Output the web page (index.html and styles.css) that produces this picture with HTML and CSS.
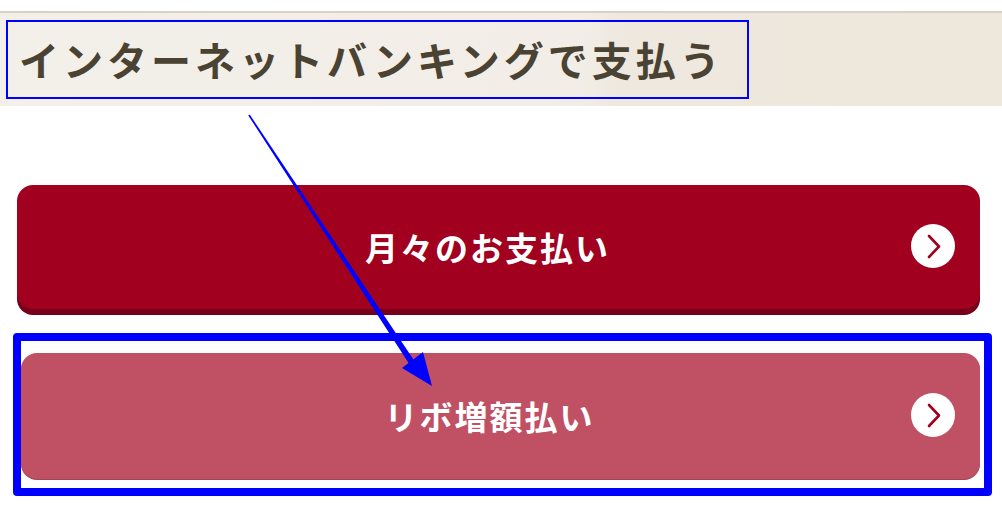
FILE: index.html
```html
<!DOCTYPE html>
<html lang="ja">
<head>
<meta charset="utf-8">
<title>インターネットバンキングで支払う</title>
<link rel="stylesheet" href="styles.css">
</head>
<body>
<div class="page">
  <div class="band">
    <h1 class="title">インターネットバンキングで支払う</h1>
  </div>
  <div class="buttons">
    <a class="btn btn-primary" href="#">
      <span class="btn-label">月々のお支払い</span>
      <span class="btn-icon"><svg viewBox="0 0 44 44" width="44" height="44"><circle cx="22" cy="22" r="22" fill="#fff"/><path d="M18 12 L28 22.5 L18 33" fill="none" stroke="#a1001f" stroke-width="2.6" stroke-linecap="round" stroke-linejoin="round"/></svg></span>
    </a>
    <a class="btn btn-secondary" href="#">
      <span class="btn-label">リボ増額払い</span>
      <span class="btn-icon"><svg viewBox="0 0 44 44" width="44" height="44"><circle cx="22" cy="22" r="22" fill="#fff"/><path d="M18 12 L28 22.5 L18 33" fill="none" stroke="#a1001f" stroke-width="2.6" stroke-linecap="round" stroke-linejoin="round"/></svg></span>
    </a>
  </div>
  <div class="annot-box"></div>
  <svg class="annot-arrow" width="1002" height="513" viewBox="0 0 1002 513">
    <polygon points="248.3,115.4 249.7,114.6 416.5,364 411.5,367.4" fill="#0000ff"/>
    <polygon points="432,386 402,368 423,352" fill="#0000ff"/>
  </svg>
</div>
</body>
</html>
```
FILE: styles.css
```css
* { box-sizing: border-box; }
html, body { margin: 0; padding: 0; background: #fff; }
body {
  font-family: "Noto Sans CJK JP", "Noto Sans", sans-serif;
  width: 1002px;
  height: 513px;
  overflow: hidden;
}
.page {
  position: relative;
  width: 1002px;
  height: 513px;
  padding-top: 11px;
}
.band {
  border-top: 2px solid #d8d1c4;
  height: 95px;
  background: linear-gradient(96deg, #f3efe9 0%, #f2eee7 58%, #eee8de 62%, #ede7dc 100%);
  padding: 7px 0 0 6px;
}
.title {
  margin: 0;
  width: 743px;
  height: 79px;
  border: 2px solid #0000ff;
  display: flex;
  align-items: center;
  padding-left: 11px;
  padding-bottom: 2px;
  font-size: 40px;
  font-weight: 700;
  letter-spacing: 4px;
  color: #4a4232;
  white-space: nowrap;
}
.buttons {
  display: flex;
  flex-direction: column;
  padding: 79px 22px 0 17px;
}
.btn {
  position: relative;
  display: flex;
  align-items: center;
  justify-content: center;
  text-decoration: none;
  color: #fff;
  border-radius: 16px;
}
.btn-primary {
  height: 124px;
  background: #a1001f;
  box-shadow: 0 6px 0 #76001a;
}
.btn-secondary {
  margin-top: 44px;
  margin-left: 4px;
  height: 126px;
  background: #c05064;
  box-shadow: 0 1px 0 #9c4656;
}
.btn-label {
  font-size: 33px;
  font-weight: 700;
  letter-spacing: 2px;
  margin-right: 22px;
  line-height: 1;
}
.btn-icon {
  position: absolute;
  right: 25px;
  top: 50%;
  width: 44px;
  height: 44px;
  margin-top: -23px;
  display: block;
}
.btn-icon svg { display: block; }
.annot-box {
  position: absolute;
  left: 13px;
  top: 333px;
  width: 979px;
  height: 163px;
  border: 8px solid #0000ff;
  border-radius: 4px;
}
.annot-arrow {
  position: absolute;
  left: 0;
  top: 0;
  pointer-events: none;
}
```
